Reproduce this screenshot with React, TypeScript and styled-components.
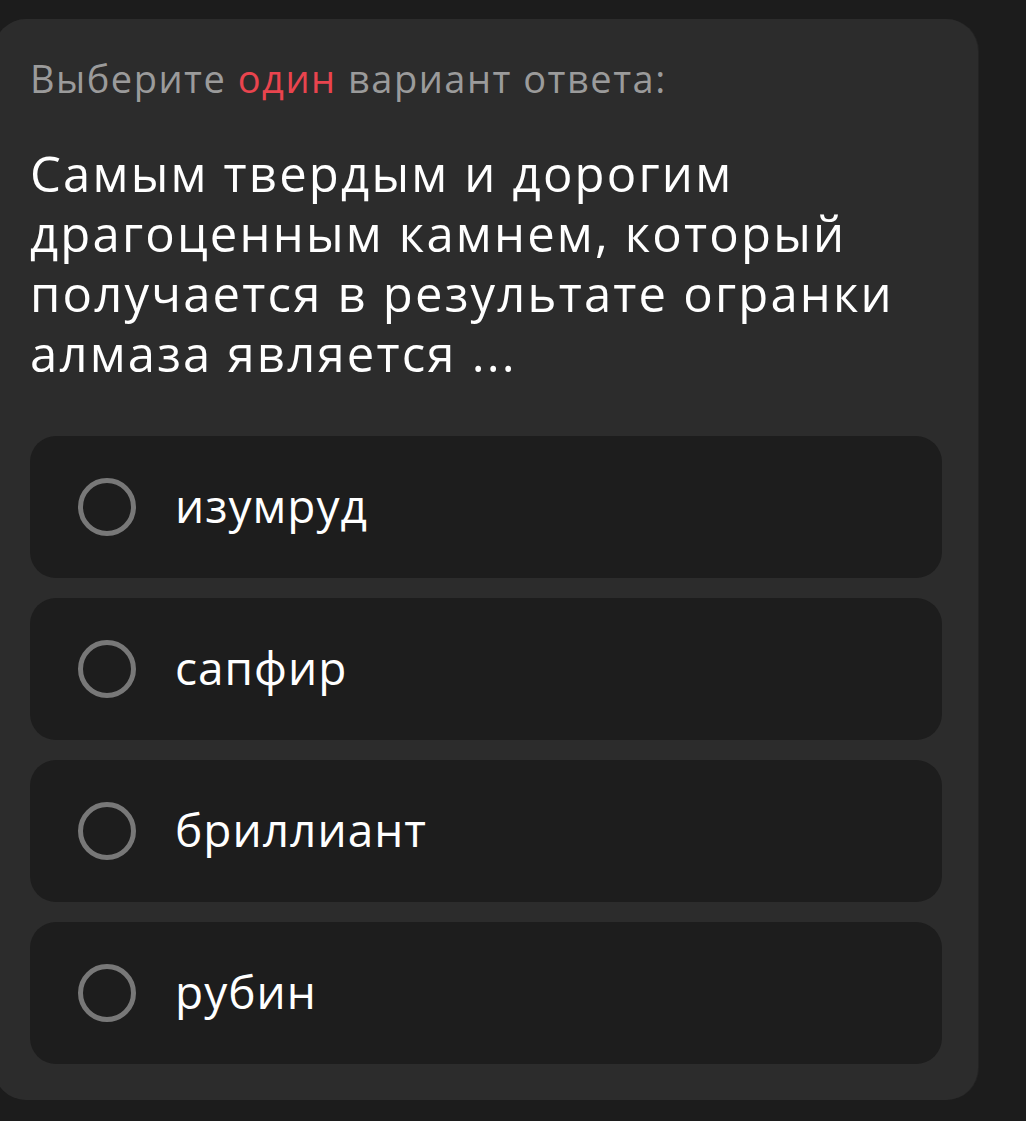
import React from 'react';
import styled, { createGlobalStyle } from 'styled-components';

const GlobalStyle = createGlobalStyle`
    html, body {
        margin: 0;
        padding: 0;
        background: #1c1c1c;
        overflow: hidden;
    }
    body {
        font-family: 'Open Sans', 'Noto Sans', sans-serif;
    }
`;

const Page = styled.div`
    width: 1026px;
    height: 1121px;
    padding-top: 19px;
    box-sizing: border-box;
`;

const Card = styled.section`
    width: 984px;
    margin-left: -6px;
    box-sizing: border-box;
    padding: 36px;
    background: #2c2c2c;
    border-radius: 32px;
    box-shadow: 1px 0 0 #232323;
`;

const Hint = styled.div`
    font-size: 38px;
    line-height: 46px;
    letter-spacing: 1.5px;
    color: #9b9b9b;
    font-weight: 400;
`;

const Accent = styled.span`
    color: #e9444e;
`;

const Question = styled.h2`
    margin: 42px 0 0;
    font-size: 49px;
    line-height: 60px;
    letter-spacing: 2.2px;
    font-weight: 500;
    color: #ffffff;
`;

const Options = styled.div`
    margin-top: 53px;
    display: flex;
    flex-direction: column;
    gap: 20px;
`;

const Option = styled.label`
    height: 142px;
    display: flex;
    align-items: center;
    gap: 39px;
    padding-left: 48px;
    background: #1d1d1d;
    border-radius: 26px;
    cursor: pointer;
`;

const Radio = styled.span`
    width: 58px;
    height: 58px;
    box-sizing: border-box;
    border: 5px solid #787878;
    border-radius: 50%;
    flex-shrink: 0;
`;

const OptionText = styled.span`
    font-size: 46px;
    letter-spacing: 1px;
    color: #ffffff;
    font-weight: 400;
    margin-top: -4px;
`;

const answers = ['изумруд', 'сапфир', 'бриллиант', 'рубин'];

const App: React.FC = () => {
    return (
        <Page>
            <GlobalStyle />
            <Card>
                <Hint>
                    Выберите <Accent>один</Accent> вариант ответа:
                </Hint>
                <Question>
                    Самым твердым и дорогим драгоценным камнем, который получается в результате огранки
                    алмаза является ...
                </Question>
                <Options>
                    {answers.map((a) => (
                        <Option key={a}>
                            <Radio />
                            <OptionText>{a}</OptionText>
                        </Option>
                    ))}
                </Options>
            </Card>
        </Page>
    );
};

export default App;
